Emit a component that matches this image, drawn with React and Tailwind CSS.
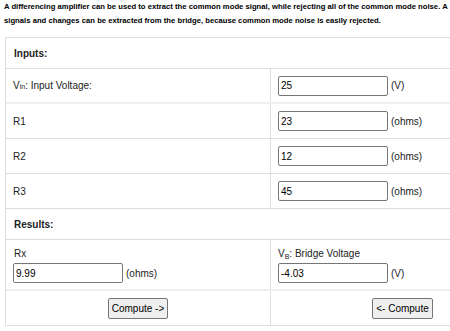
import React from "react";

const inputRows = [
  { label: <>V<sub className="text-[7px]">in</sub>: Input Voltage:</>, value: "25", unit: "(V)", thick: true },
  { label: "R1", value: "23", unit: "(ohms)" },
  { label: "R2", value: "12", unit: "(ohms)" },
  { label: "R3", value: "45", unit: "(ohms)" },
];

function Field({ value, unit }) {
  return (
    <div className="flex items-center gap-[3px]">
      <input
        readOnly
        value={value}
        className="w-[110px] h-[20px] border border-[#767676] rounded-[2px] px-[2px] text-[10px] text-black bg-white outline-none"
      />
      <span className="text-[10px] text-[#222]">{unit}</span>
    </div>
  );
}

export default function App() {
  return (
    <div className="w-[450px] h-[331px] overflow-hidden bg-white text-[#222]" style={{ fontFamily: '"Liberation Sans", Arial, sans-serif' }}>
      <p className="pl-[4px] text-[7.7px] font-bold leading-[14px] whitespace-nowrap text-black">
        A differencing amplifier can be used to extract the common mode signal, while rejecting all of the common mode noise. A
        <br />
        signals and changes can be extracted from the bridge, because common mode noise is easily rejected.
      </p>

      <div className="ml-[5px] mt-[9px] w-[530px] border border-[#ddd]">
        {/* header */}
        <div className="h-[31px] flex items-center pl-[8px] border-b border-[#ddd] text-[10px] font-bold">Inputs:</div>

        {inputRows.map((r, i) => (
          <div key={i} className={`grid grid-cols-2 h-[35px] ${r.thick ? "border-b-2 border-[#eee]" : "border-b border-[#ddd]"}`}>
            <div className="flex items-center pl-[7px] text-[10px]">{r.label}</div>
            <div className="flex items-center pl-[7px] border-l border-[#ddd]">
              <Field value={r.value} unit={r.unit} />
            </div>
          </div>
        ))}

        <div className="h-[31px] flex items-center pl-[8px] border-b border-[#ddd] text-[10px] font-bold">Results:</div>

        <div className="grid grid-cols-2 h-[51px] border-b-2 border-[#eee]">
          <div className="flex flex-col justify-center pl-[7px] text-[10px] gap-[2px]">
            <span className="pl-[1px]">Rx</span>
            <Field value="9.99" unit="(ohms)" />
          </div>
          <div className="flex flex-col justify-center pl-[7px] text-[10px] gap-[2px] border-l border-[#ddd]">
            <span>V<sub className="text-[7px]">B</sub>: Bridge Voltage</span>
            <Field value="-4.03" unit="(V)" />
          </div>
        </div>

        <div className="grid grid-cols-2 h-[34px]">
          <div className="flex items-center justify-center">
            <button className="h-[21px] px-[3px] text-[10px] text-black bg-[#efefef] border border-[#767676] rounded-[2px]">Compute -&gt;</button>
          </div>
          <div className="flex items-center justify-center border-l border-[#ddd]">
            <button className="h-[21px] px-[3px] text-[10px] text-black bg-[#efefef] border border-[#767676] rounded-[2px]">&lt;- Compute</button>
          </div>
        </div>
      </div>
    </div>
  );
}
